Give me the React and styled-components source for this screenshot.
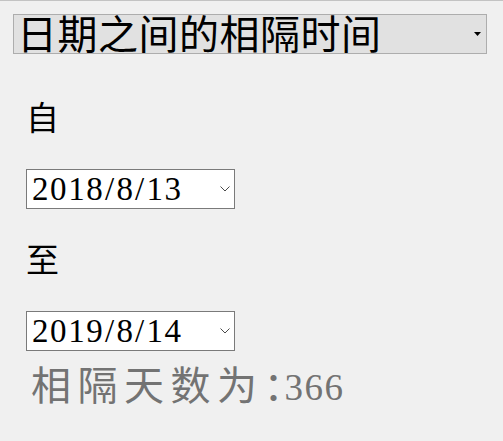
import React from "react";
import styled, { createGlobalStyle } from "styled-components";

const GlobalStyle = createGlobalStyle`
  html, body {
    margin: 0;
    padding: 0;
    background: #f0f0f0;
  }
  body {
    font-family: "Noto Sans CJK SC", sans-serif;
    color: #000;
  }
`;

const Page = styled.div`
  box-sizing: border-box;
  width: 503px;
  min-height: 441px;
  border-top: 1px solid #c3c3c3;
  padding: 13px 0 0 13px;
  display: flex;
  flex-direction: column;
  align-items: flex-start;
`;

const TitleSelect = styled.div`
  box-sizing: border-box;
  width: 474px;
  height: 40px;
  border: 1px solid #adadad;
  background: #e1e1e1;
  display: flex;
  align-items: center;
  justify-content: space-between;
  padding: 0 5px 0 3px;
`;

const TitleText = styled.span`
  display: block;
  font-size: 40px;
  line-height: 34px;
  margin-bottom: 4px;
  white-space: nowrap;
  letter-spacing: 0.5px;
`;

const Content = styled.div`
  margin-top: 42px;
  padding-left: 13px;
  display: flex;
  flex-direction: column;
  align-items: flex-start;
  gap: 29px;
`;

const Field = styled.div`
  display: flex;
  flex-direction: column;
  align-items: flex-start;
  gap: 33px;
`;

const Label = styled.div`
  font-size: 33px;
  line-height: 40px;
`;

const DateBox = styled.div`
  box-sizing: border-box;
  width: 209px;
  height: 40px;
  border: 1px solid #7a7a7a;
  background: #fff;
  display: flex;
  align-items: center;
  justify-content: space-between;
  padding: 0 4px 0 5px;
`;

const DateText = styled.span`
  font-family: "Liberation Serif", serif;
  font-size: 33px;
  line-height: 38px;
  letter-spacing: 1.6px;
  white-space: nowrap;
`;

const Slash = styled.span`
  margin: 0 0.6px;
`;

const Result = styled.div`
  margin: 10px 0 0 18px;
  font-size: 40px;
  line-height: 44px;
  color: #737373;
  letter-spacing: 6.5px;
  white-space: nowrap;
`;

const Colon = styled.span`
  letter-spacing: -19px;
`;

const Count = styled.span`
  font-family: "Liberation Serif", serif;
  font-size: 37px;
  letter-spacing: 1.5px;
`;

const Triangle = () => (
  <svg width="7" height="4" viewBox="0 0 7 4" aria-hidden="true">
    <path d="M0 0 H7 L3.5 4 Z" fill="#000" />
  </svg>
);

const Chevron = () => (
  <svg width="10" height="6" viewBox="0 0 10 6" aria-hidden="true">
    <polyline points="0.5,0.5 5,5 9.5,0.5" fill="none" stroke="#4a4a4a" strokeWidth="1" />
  </svg>
);

const DateValue = ({ value }) => {
  const parts = value.split("/");
  return (
    <DateText>
      {parts.map((p, i) => (
        <React.Fragment key={i}>
          {i > 0 && <Slash>/</Slash>}
          {p}
        </React.Fragment>
      ))}
    </DateText>
  );
};

const DateSelect = ({ value }) => (
  <DateBox role="combobox">
    <DateValue value={value} />
    <Chevron />
  </DateBox>
);

export default function App() {
  return (
    <>
      <GlobalStyle />
      <Page>
        <TitleSelect role="combobox">
          <TitleText>日期之间的相隔时间</TitleText>
          <Triangle />
        </TitleSelect>
        <Content>
          <Field>
            <Label>自</Label>
            <DateSelect value="2018/8/13" />
          </Field>
          <Field>
            <Label>至</Label>
            <DateSelect value="2019/8/14" />
          </Field>
        </Content>
        <Result>
          相隔天数为<Colon>：</Colon>
          <Count>366</Count>
        </Result>
      </Page>
    </>
  );
}
